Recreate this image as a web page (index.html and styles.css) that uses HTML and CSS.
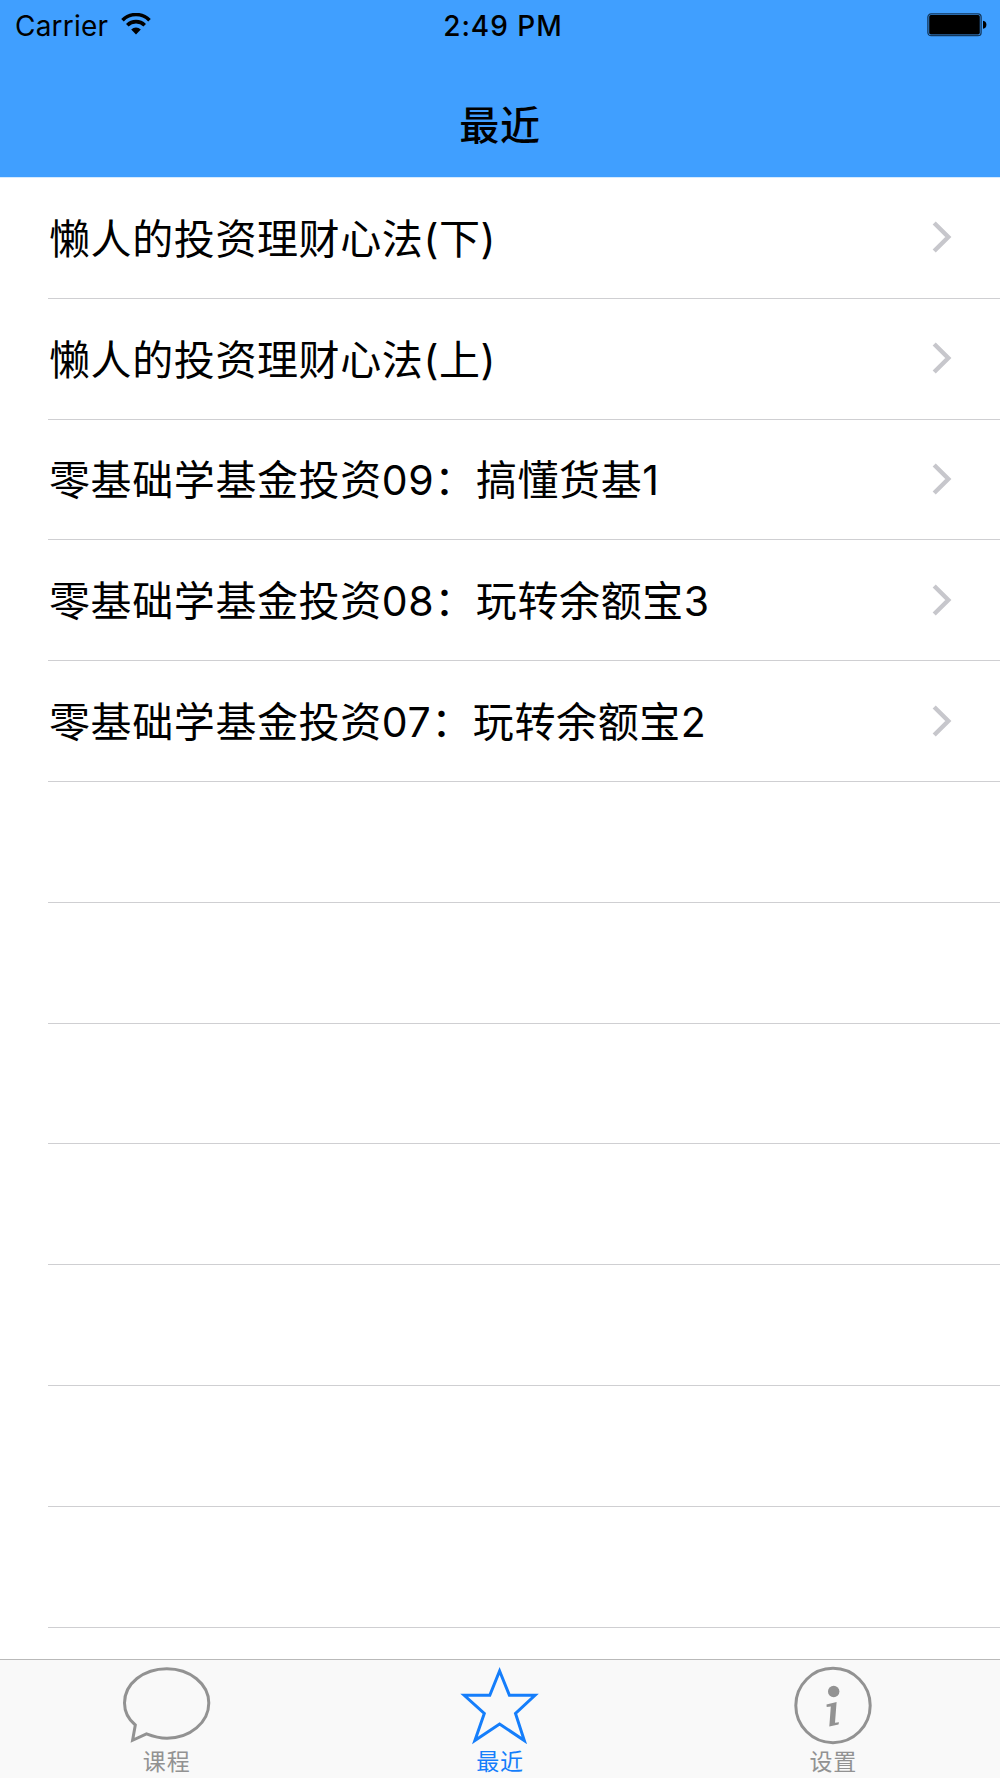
FILE: index.html
```
<!DOCTYPE html>
<html lang="zh-CN">
<head>
    <meta charset="UTF-8">
    <meta name="viewport" content="width=device-width, initial-scale=1.0">
    <title>最近</title>
    <link rel="stylesheet" href="styles.css">
</head>
<body>

<div class="app">
    <header class="header">
        <div class="status-bar">
            <div class="status-left">
                <span class="carrier">Carrier</span>
                <svg class="wifi" width="30" height="22" viewBox="0 0 30 22">
                    <path d="M1.5 7.2 A19 19 0 0 1 28.5 7.2" fill="none" stroke="#000" stroke-width="3.6"/>
                    <path d="M6.3 12.2 A12.3 12.3 0 0 1 23.7 12.2" fill="none" stroke="#000" stroke-width="3.6"/>
                    <path d="M10.2 16.5 A7 7 0 0 1 19.8 16.5 L15 21.5 Z"/>
                </svg>
            </div>
            <div class="time">2:49 PM</div>
            <div class="status-right">
                <svg width="60" height="24" viewBox="0 0 60 24">
                    <rect x="0.9" y="0.9" width="53.2" height="21.8" rx="3.2" fill="none" stroke="#13365a" stroke-width="1.3"/>
                    <rect x="2.2" y="2.1" width="50.6" height="19.3" rx="1.6"/>
                    <path d="M56 7.8 Q59.4 8.4 59.4 11.8 Q59.4 15.2 56 15.8 Z"/>
                </svg>
            </div>
        </div>
        <h1 class="title">最近</h1>
    </header>

    <ul class="list">
        <li class="row"><span class="name">懒人的投资理财心法(下)</span><svg class="chevron" viewBox="0 0 20 34"><path d="M2.2 3 L16.3 17 L2.2 31"/></svg></li>
        <li class="row"><span class="name">懒人的投资理财心法(上)</span><svg class="chevron" viewBox="0 0 20 34"><path d="M2.2 3 L16.3 17 L2.2 31"/></svg></li>
        <li class="row"><span class="name">零基础学基金投资09：搞懂货基1</span><svg class="chevron" viewBox="0 0 20 34"><path d="M2.2 3 L16.3 17 L2.2 31"/></svg></li>
        <li class="row"><span class="name">零基础学基金投资08：玩转余额宝3</span><svg class="chevron" viewBox="0 0 20 34"><path d="M2.2 3 L16.3 17 L2.2 31"/></svg></li>
        <li class="row"><span class="name">零基础学基金投资07：玩转余额宝2</span><svg class="chevron" viewBox="0 0 20 34"><path d="M2.2 3 L16.3 17 L2.2 31"/></svg></li>
        <!-- Empty rows -->
        <li class="row"></li>
        <li class="row"></li>
        <li class="row"></li>
        <li class="row"></li>
        <li class="row"></li>
        <li class="row"></li>
        <li class="row"></li>
    </ul>

    <nav class="tab-bar">
        <a class="tab">
            <svg width="90" height="80" viewBox="0 0 90 80">
                <path d="M13.3 59 C5.8 52.8 2.5 45 2.5 37 C2.5 17.5 21.5 2.7 44.8 2.7 C68 2.7 86.8 18 86.8 37 C86.8 56.5 68 72.2 45 72.2 C37.5 72.2 31.5 70.6 24.5 67.9 L10.6 74.3 Z"/>
            </svg>
            <span>课程</span>
        </a>
        <a class="tab active">
            <svg width="90" height="80" viewBox="0 0 90 80">
                <path d="M44.6 5 L54.4 29.3 L80 29.3 L60.5 47.5 L69.3 74.5 L44.6 58 L19.9 74.5 L29.3 47.5 L9.2 29.3 L34.8 29.3 Z"/>
            </svg>
            <span>最近</span>
        </a>
        <a class="tab">
            <svg width="90" height="80" viewBox="0 0 90 80">
                <circle cx="45" cy="39.5" r="37.2"/>
                <circle class="solid" cx="45.7" cy="25.5" r="5.7"/>
                <path class="solid" d="M38.5 38.5 L48.6 36 L47 56.8 L51 56.2 L50.5 58.4 L41.3 60.5 L42.8 40.6 L38.7 41 Z"/>
            </svg>
            <span>设置</span>
        </a>
    </nav>
</div>

</body>
</html>
```
FILE: styles.css
```
body, html {
    margin: 0;
    padding: 0;
    height: 100%;
    overflow: hidden;
    background-color: #fff;
}

.app {
    display: flex;
    flex-direction: column;
    height: 100%;
    color: #000;
    font-family: Inter, "Noto Sans CJK SC", sans-serif;
}

.header {
    flex: none;
    box-sizing: border-box;
    height: 178px;
    border-bottom: 1px solid #d5eaff;
    background-color: #409fff;
}

.status-bar {
    display: grid;
    grid-template-columns: 1fr auto 1fr;
    align-items: center;
    height: 50px;
    padding: 0 13px 0 15px;
    font-size: 28px;
}

.status-left {
    display: flex;
    align-items: center;
    gap: 13px;
}

.carrier {
    padding-top: 1px;
    letter-spacing: 0.2px;
}

.wifi {
    margin-top: -3px;
}

.time {
    padding: 1px 0 0 4px;
    font-weight: 550;
    font-size: 28px;
    letter-spacing: 1px;
}

.status-right {
    display: flex;
    justify-content: flex-end;
}

.title {
    margin: 0;
    padding-top: 46px;
    font-size: 40px;
    font-weight: 500;
    line-height: 60px;
    letter-spacing: 0.8px;
    text-align: center;
}

.list {
    flex: 1;
    min-height: 0;
    margin: 0;
    padding: 0 0 0 48px;
    overflow: hidden;
    list-style: none;
}

.row {
    display: flex;
    align-items: center;
    justify-content: space-between;
    box-sizing: border-box;
    height: 120.8px;
    padding-right: 48px;
    border-bottom: 1px solid #cfcfd2;
    font-size: 41px;
    line-height: 60px;
    letter-spacing: 0.6px;
    white-space: nowrap;
}

.name {
    padding: 2px 0 0 1px;
}

.chevron {
    width: 20px;
    height: 34px;
    margin-top: -1px;
    fill: none;
    stroke: #c7c7cc;
    stroke-width: 4.4;
}

.tab-bar {
    display: flex;
    flex: none;
    box-sizing: border-box;
    height: 119px;
    border-top: 1px solid #b9b9b9;
    background-color: #f9f9f9;
}

.tab {
    display: flex;
    flex: 1;
    flex-direction: column;
    align-items: center;
    padding-top: 6px;
    color: #929292;
    font-size: 23px;
    line-height: 32px;
    letter-spacing: 0.8px;
}

.tab svg {
    fill: none;
    stroke: currentColor;
    stroke-width: 3;
}

.tab .solid {
    fill: currentColor;
    stroke: none;
}

.tab.active {
    color: #157efb;
}
```
